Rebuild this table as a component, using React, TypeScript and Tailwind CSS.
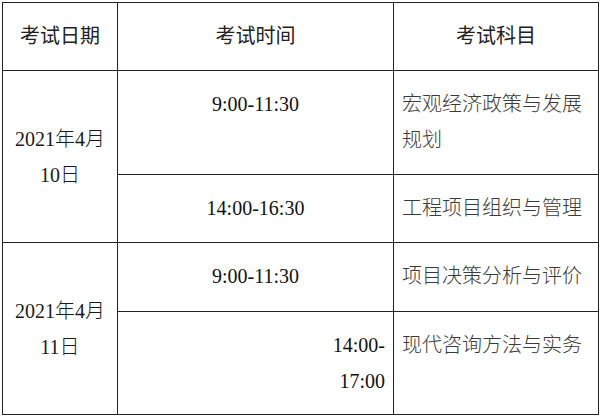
import React from "react";

const serif = { fontFamily: '"Liberation Serif", "Noto Sans CJK SC", serif' };

export default function App() {
  const cell = "border-r border-b border-[#222]";
  return (
    <div className="w-[600px] h-[418px] bg-white pt-[2px] pl-[2px]">
      <div
        className="grid grid-cols-[115px_276px_205px] grid-rows-[68px_104px_68px_69px_103px] border-l border-t border-[#222] w-fit text-[20px] leading-[36px]"
        style={serif}
      >
        <div className={`${cell} flex items-center justify-center pb-[4px] text-[#222] font-['Noto_Sans_CJK_SC',sans-serif]`}>考试日期</div>
        <div className={`${cell} flex items-center justify-center pb-[4px] text-[#222] font-['Noto_Sans_CJK_SC',sans-serif]`}>考试时间</div>
        <div className={`${cell} flex items-center justify-center pb-[4px] text-[#222] font-['Noto_Sans_CJK_SC',sans-serif]`}>考试科目</div>

        <div className={`${cell} row-span-2 flex flex-col items-center justify-center text-[#1a1a1a] font-light`}>
          <span>2021年4月</span>
          <span>10日</span>
        </div>
        <div className={`${cell} pt-[15px] text-center text-[#111]`}>9:00-11:30</div>
        <div className={`${cell} pt-[15px] pl-2 text-[#3a3a3a] font-light`}>宏观经济政策与发展规划</div>

        <div className={`${cell} pt-[15px] text-center text-[#111]`}>14:00-16:30</div>
        <div className={`${cell} pt-[15px] pl-2 text-[#3a3a3a] font-light`}>工程项目组织与管理</div>

        <div className={`${cell} row-span-2 flex flex-col items-center justify-center text-[#1a1a1a] font-light`}>
          <span>2021年4月</span>
          <span>11日</span>
        </div>
        <div className={`${cell} pt-[15px] text-center text-[#111]`}>9:00-11:30</div>
        <div className={`${cell} pt-[15px] pl-2 text-[#3a3a3a] font-light`}>项目决策分析与评价</div>

        <div className={`${cell} pt-[15px] pr-2 text-right text-[#111]`}>
          14:00-
          <br />
          17:00
        </div>
        <div className={`${cell} pt-[15px] pl-2 text-[#3a3a3a] font-light`}>现代咨询方法与实务</div>
      </div>
    </div>
  );
}
